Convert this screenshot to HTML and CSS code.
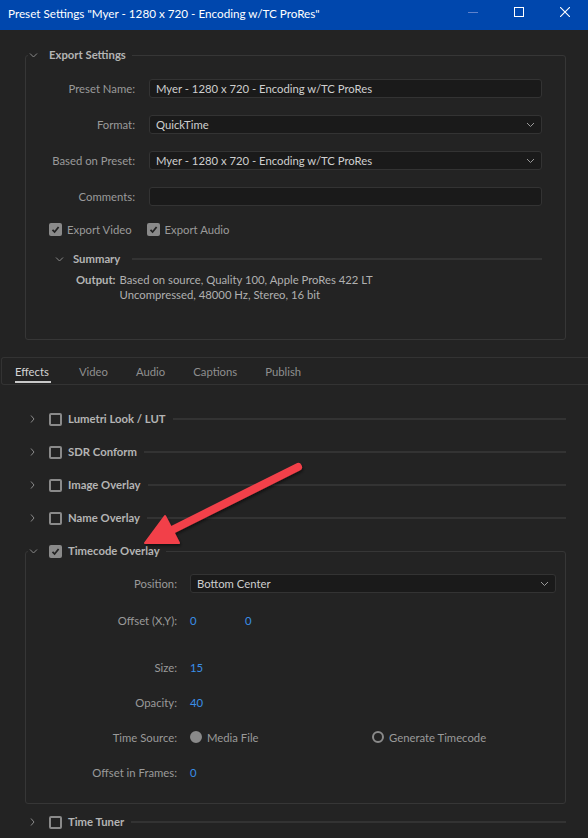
FILE: index.html
```html
<!DOCTYPE html>
<html lang="en">
<head>
  <meta charset="UTF-8" />
  <title>Preset Settings</title>
  <link rel="stylesheet" href="styles.css">
</head>
<body>
<div class="window">
  <div class="titlebar">
    <span class="title">Preset Settings "Myer - 1280 x 720 - Encoding w/TC ProRes"</span>
    <div class="win-controls">
      <span class="win-btn"><svg width="10" height="10" viewBox="0 0 10 10"><line x1="0" y1="5.5" x2="10" y2="5.5" stroke="#5f82cc" stroke-width="1"/></svg></span>
      <span class="win-btn"><svg width="10" height="10" viewBox="0 0 10 10"><rect x="0.5" y="0.5" width="9" height="9" fill="none" stroke="#fff" stroke-width="1"/></svg></span>
      <span class="win-btn"><svg width="10" height="10" viewBox="0 0 10 10"><path d="M0 0 L10 10 M10 0 L0 10" stroke="#fff" stroke-width="1.1"/></svg></span>
    </div>
  </div>

  <fieldset class="group export">
    <legend>
      <span class="chev"><svg width="10" height="8" viewBox="0 0 10 8"><polyline points="2,2.5 5.5,6 9,2.5" fill="none" stroke="#8a8a8a" stroke-width="1"/></svg></span>
      <span class="group-title">Export Settings</span>
    </legend>

    <div class="form-row">
      <label class="label">Preset Name:</label>
      <div class="field">Myer - 1280 x 720 - Encoding w/TC ProRes</div>
    </div>
    <div class="form-row">
      <label class="label">Format:</label>
      <div class="field select">QuickTime<svg class="drop" width="9" height="6" viewBox="0 0 9 6"><polyline points="1,1 4.5,4.5 8,1" fill="none" stroke="#9a9a9a" stroke-width="1"/></svg></div>
    </div>
    <div class="form-row">
      <label class="label">Based on Preset:</label>
      <div class="field select">Myer - 1280 x 720 - Encoding w/TC ProRes<svg class="drop" width="9" height="6" viewBox="0 0 9 6"><polyline points="1,1 4.5,4.5 8,1" fill="none" stroke="#9a9a9a" stroke-width="1"/></svg></div>
    </div>
    <div class="form-row">
      <label class="label">Comments:</label>
      <div class="field"></div>
    </div>

    <div class="checks">
      <span class="check-item"><span class="box checked"><svg width="13" height="13" viewBox="0 0 13 13"><polyline points="3.5,6.8 5.6,9 9.6,4" fill="none" stroke="#222" stroke-width="1.8"/></svg></span>Export Video</span>
      <span class="check-item"><span class="box checked"><svg width="13" height="13" viewBox="0 0 13 13"><polyline points="3.5,6.8 5.6,9 9.6,4" fill="none" stroke="#222" stroke-width="1.8"/></svg></span>Export Audio</span>
    </div>

    <div class="summary-head">
      <span class="chev"><svg width="10" height="8" viewBox="0 0 10 8"><polyline points="2,2.5 5.5,6 9,2.5" fill="none" stroke="#8a8a8a" stroke-width="1"/></svg></span>
      <span class="group-title">Summary</span>
      <span class="rule"></span>
    </div>
    <div class="output">
      <b>Output:</b>
      <div>Based on source, Quality 100, Apple ProRes 422 LT<br>Uncompressed, 48000 Hz, Stereo, 16 bit</div>
    </div>
  </fieldset>

  <div class="tabs">
    <span class="tab active">Effects</span>
    <span class="tab">Video</span>
    <span class="tab">Audio</span>
    <span class="tab">Captions</span>
    <span class="tab">Publish</span>
  </div>

  <div class="effects">
    <div class="effect">
      <span class="chev"><svg width="10" height="8" viewBox="0 0 10 8"><polyline points="3,0.5 6,4 3,7.5" fill="none" stroke="#8a8a8a" stroke-width="1"/></svg></span>
      <span class="box"></span>
      <span class="group-title">Lumetri Look / LUT</span>
      <span class="rule"></span>
    </div>
    <div class="effect">
      <span class="chev"><svg width="10" height="8" viewBox="0 0 10 8"><polyline points="3,0.5 6,4 3,7.5" fill="none" stroke="#8a8a8a" stroke-width="1"/></svg></span>
      <span class="box"></span>
      <span class="group-title">SDR Conform</span>
      <span class="rule"></span>
    </div>
    <div class="effect">
      <span class="chev"><svg width="10" height="8" viewBox="0 0 10 8"><polyline points="3,0.5 6,4 3,7.5" fill="none" stroke="#8a8a8a" stroke-width="1"/></svg></span>
      <span class="box"></span>
      <span class="group-title">Image Overlay</span>
      <span class="rule"></span>
    </div>
    <div class="effect">
      <span class="chev"><svg width="10" height="8" viewBox="0 0 10 8"><polyline points="3,0.5 6,4 3,7.5" fill="none" stroke="#8a8a8a" stroke-width="1"/></svg></span>
      <span class="box"></span>
      <span class="group-title">Name Overlay</span>
      <span class="rule"></span>
    </div>

    <fieldset class="group timecode">
      <legend>
        <span class="chev"><svg width="10" height="8" viewBox="0 0 10 8"><polyline points="2,2.5 5.5,6 9,2.5" fill="none" stroke="#8a8a8a" stroke-width="1"/></svg></span>
        <span class="box checked"><svg width="13" height="13" viewBox="0 0 13 13"><polyline points="3.5,6.8 5.6,9 9.6,4" fill="none" stroke="#222" stroke-width="1.8"/></svg></span>
        <span class="group-title">Timecode Overlay</span>
      </legend>

      <div class="tc-row first">
        <span class="label">Position:</span>
        <div class="field select">Bottom Center<svg class="drop" width="9" height="6" viewBox="0 0 9 6"><polyline points="1,1 4.5,4.5 8,1" fill="none" stroke="#9a9a9a" stroke-width="1"/></svg></div>
      </div>
      <div class="tc-row">
        <span class="label">Offset (X,Y):</span>
        <span class="value">0</span>
        <span class="value second">0</span>
      </div>
      <div class="tc-row spaced">
        <span class="label">Size:</span>
        <span class="value">15</span>
      </div>
      <div class="tc-row">
        <span class="label">Opacity:</span>
        <span class="value">40</span>
      </div>
      <div class="tc-row">
        <span class="label">Time Source:</span>
        <span class="radio-item"><span class="radio on"></span>Media File</span>
        <span class="radio-item"><span class="radio"></span>Generate Timecode</span>
      </div>
      <div class="tc-row">
        <span class="label">Offset in Frames:</span>
        <span class="value">0</span>
      </div>
    </fieldset>

    <div class="effect last">
      <span class="chev"><svg width="10" height="8" viewBox="0 0 10 8"><polyline points="3,0.5 6,4 3,7.5" fill="none" stroke="#8a8a8a" stroke-width="1"/></svg></span>
      <span class="box"></span>
      <span class="group-title">Time Tuner</span>
      <span class="rule"></span>
    </div>
  </div>

  <!-- annotation arrow drawn over the dialog -->
  <svg class="arrow" width="588" height="838" viewBox="0 0 588 838">
    <defs>
      <filter id="shadow" x="-20%" y="-20%" width="140%" height="140%">
        <feDropShadow dx="1" dy="2" stdDeviation="1.5" flood-color="#000" flood-opacity="0.5"/>
      </filter>
    </defs>
    <g filter="url(#shadow)">
      <line x1="298" y1="467" x2="168" y2="532" stroke="#f2414a" stroke-width="8" stroke-linecap="round"/>
      <polygon points="145,543 165,516 179,543" fill="#f2414a" stroke="#f2414a" stroke-width="2" stroke-linejoin="round"/>
    </g>
  </svg>
</div>
</body>
</html>
```

FILE: styles.css
```css
body {
  margin: 0;
  background: #232323;
  font-family: Lato, "Noto Sans", sans-serif;
  font-size: 11.3px;
  color: #9a9a9a;
}

.window {
  position: relative;
  width: 588px;
  height: 838px;
  overflow: hidden;
  background: #232323;
}

/* title bar */
.titlebar {
  height: 30px;
  background: #0047ad;
  display: flex;
  align-items: center;
  justify-content: space-between;
}

.title {
  padding-left: 8px;
  color: #ffffff;
  font-size: 11.7px;
  margin-top: -4px;
}

.win-controls {
  display: flex;
  align-self: flex-start;
}

.win-btn {
  width: 46px;
  height: 24px;
  display: flex;
  align-items: center;
  justify-content: center;
}

/* group boxes */
.group {
  border: 1px solid #363636;
  border-radius: 3px;
  padding: 0;
  margin: 0;
  min-width: 0;
}

.group legend {
  display: flex;
  align-items: center;
  height: 16px;
  margin-left: 2px;
  padding: 0 6px 0 0;
}

.chev {
  width: 10px;
  height: 8px;
  display: flex;
  margin-right: 11px;
}

.group-title {
  font-weight: bold;
  color: #b4b4b4;
  line-height: 16px;
}

.export {
  margin: 17px 22px 0 25px;
  padding: 16px 23px 37px 0;
}

.form-row {
  display: flex;
  align-items: center;
  margin-bottom: 17px;
}

.label {
  width: 109px;
  text-align: right;
  margin-right: 14px;
  flex-shrink: 0;
}

.field {
  flex: 1;
  height: 17px;
  background: #1a1a1a;
  border: 1px solid #333333;
  border-radius: 3px;
  color: #cfcfcf;
  padding: 0 6px;
  line-height: 17px;
  display: flex;
  align-items: center;
  justify-content: space-between;
}

.checks {
  display: flex;
  align-items: center;
  height: 16px;
  margin-top: -2px;
  padding-left: 23px;
  gap: 15px;
}

.check-item {
  display: flex;
  align-items: center;
}

.box {
  width: 13px;
  height: 13px;
  box-sizing: border-box;
  border: 2px solid #8a8a8a;
  border-radius: 2px;
  margin-right: 6px;
  display: flex;
  flex-shrink: 0;
}

.box.checked {
  border: none;
  background: #8a8a8a;
}

.check-item .box {
  margin-right: 5px;
}

.summary-head {
  display: flex;
  align-items: center;
  height: 16px;
  margin-top: 14px;
  padding-left: 28px;
}

.summary-head .chev {
  margin-right: 9px;
}

.rule {
  flex: 1;
  height: 2px;
  background: #333333;
  margin-left: 12px;
}

.output {
  display: flex;
  margin-top: 5px;
  padding-left: 50px;
  line-height: 15px;
  color: #b0b0b0;
}

.output b {
  color: #b4b4b4;
  margin-right: 4px;
}

/* tabs */
.tabs {
  display: flex;
  gap: 28px;
  margin: 17px 0 0 1px;
  padding-left: 13px;
  height: 26px;
  border: 1px solid #333333;
  border-right: none;
  border-radius: 3px 0 0 3px;
}

.tab {
  padding-top: 6px;
  height: 17px;
  line-height: 16px;
  color: #8f8f8f;
}

.tab.active {
  color: #d4d4d4;
  border-bottom: 2px solid #c8c8c8;
  padding-right: 2px;
}

/* effects list */
.effects {
  display: flex;
  flex-direction: column;
  gap: 17px;
  margin-top: 26px;
  padding: 0 22px 0 25px;
}

.effect {
  display: flex;
  align-items: center;
  height: 16px;
  padding-left: 3px;
}

.effect .rule {
  margin-left: 7px;
}

.effect.last {
  margin-top: -7px;
}

.timecode {
  padding: 15px 9px 23px 0;
}

.tc-row {
  display: flex;
  align-items: center;
  height: 16px;
  margin-top: 19px;
}

.tc-row.first {
  height: 19px;
  margin-top: 0;
}

.tc-row.spaced {
  margin-top: 31px;
}

.tc-row .label {
  width: 151px;
  margin-right: 13px;
}

.value {
  color: #3a8fe8;
  width: 55px;
}

.radio-item {
  display: flex;
  align-items: center;
  width: 182px;
  color: #9a9a9a;
}

.radio {
  width: 12px;
  height: 12px;
  box-sizing: border-box;
  border: 2px solid #8a8a8a;
  border-radius: 50%;
  margin-right: 5px;
}

.radio.on {
  background: #8a8a8a;
}

.arrow {
  position: absolute;
  left: 0;
  top: 0;
  pointer-events: none;
}
```
